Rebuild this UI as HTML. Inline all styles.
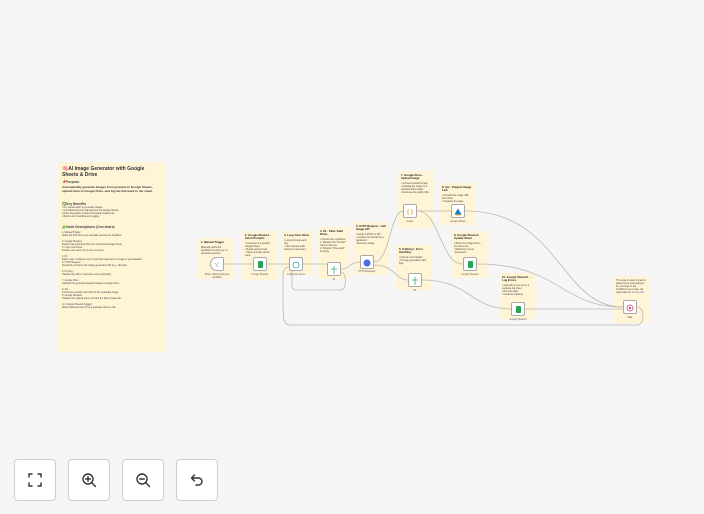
<!DOCTYPE html>
<html><head><meta charset="utf-8"><style>
*{margin:0;padding:0;box-sizing:border-box}
body{width:704px;height:514px;overflow:hidden;background:#f6f6f6;font-family:"Liberation Sans",sans-serif;position:relative}
.n{position:absolute;background:#fff4d6;border-radius:2px;color:#444;font-size:2.4px;line-height:3px;padding:3px;overflow:hidden}
.n b{display:block;font-size:2.8px;color:#222;margin-bottom:2px}
.nd{position:absolute;width:14px;height:14px;background:#fff;border:1px solid #aaa;border-radius:2px}
.lb{position:absolute;font-size:2.4px;color:#555;text-align:center;width:30px}
.btn{position:absolute;top:459px;width:42px;height:42px;background:#fff;border:1px solid #cfcfcf;border-radius:4px;display:flex;align-items:center;justify-content:center}
</style></head><body>
<svg width="704" height="514" style="position:absolute;left:0;top:0">
<defs><pattern id="p" width="5" height="5" patternUnits="userSpaceOnUse" patternTransform="rotate(45)"><line x1="0" y1="0" x2="0" y2="5" stroke="#f2f2f2" stroke-width="1"/></pattern></defs>
<rect width="704" height="514" fill="url(#p)"/>
</svg>
<div class="n" style="left:58px;top:162px;width:107px;height:190px;padding:4px">
<div style="font-size:5px;line-height:6px;font-weight:bold;color:#333">🧠AI Image Generator with Google Sheets &amp; Drive</div>
<div style="font-size:3.3px;margin-top:3px;font-weight:bold">📌Purpose</div>
<div style="font-size:3px;line-height:4px;font-weight:bold;color:#333;margin-top:1px">Automatically generate images from prompts in Google Sheets, upload them to Google Drive, and log the link back to the sheet.</div>
<div style="font-size:3.3px;margin-top:10px;font-weight:bold">✅Key Benefits</div>
<div>• No manual effort to generate images<br>• Centralized prompt management via Google Sheets<br>• Drive integration provides shareable image links<br>• Built-in error handling and logging</div>
<div style="font-size:3.3px;margin-top:8px;font-weight:bold">🧩Node Descriptions (One-liners)</div>
<div style="margin-top:2px">1. Manual Trigger<br>Starts the flow when you manually execute the workflow.<br><br>2. Google Sheets1<br>Reads rows (prompts) from the connected Google Sheet.<br>3. Loop Over Items<br>Iterates over each row (1 line at a time).<br><br>4. If1<br>Filters rows: continues only if a prompt exists and no image is yet uploaded.<br>5. HTTP Request<br>Sends the prompt to the image generation API (e.g., OpenAI).<br><br>6. If (retry)<br>Handles any API or response errors gracefully.<br><br>7. Google Drive<br>Uploads the generated base64 image to Google Drive.<br><br>8. Set<br>Constructs a public view URL for the uploaded image.<br>9. Google Sheets2<br>Updates the original sheet row with the Drive image link.<br><br>10. Google Sheets3 (logger)<br>Writes failures/errors (if) to a separate sheet or tab.</div>
</div>
<div class="n" style="left:198px;top:238px;width:36px;height:41px"><b>1. Manual Trigger</b>Manually starts the workflow for testing or on-demand execution.</div>
<div class="n" style="left:242px;top:231px;width:36px;height:49px"><b>2. Google Sheets1 - Fetch Prompts</b>• Connects to a specific Google Sheet<br>• Reads prompt rows<br>• These prompts will be used</div>
<div class="n" style="left:281px;top:231px;width:32px;height:44px"><b>3. Loop Over Items</b>• Loops through each row<br>• This ensures each prompt is processed</div>
<div class="n" style="left:317px;top:227px;width:33px;height:52px"><b>4. If1 - Filter Valid Rows</b>• Checks two conditions:<br>1. Whether the "Prompt" column has text<br>2. Whether "Drive path" is empty</div>
<div class="n" style="left:353px;top:222px;width:36px;height:53px"><b>5. HTTP Request - Call Image API</b>• Sends a POST to API<br>• Includes the prompt as a parameter<br>• Receives image</div>
<div class="n" style="left:398px;top:171px;width:36px;height:57px"><b>7. Google Drive - Upload Image</b>• Converts base64 image<br>• Uploads the image to a specified Drive folder<br>• Retrieves the public URL</div>
<div class="n" style="left:439px;top:183px;width:36px;height:42px"><b>8. Set - Prepare Image Link</b>• Formats the image URL from Drive<br>• Prepares the value</div>
<div class="n" style="left:451px;top:231px;width:36px;height:47px"><b>9. Google Sheets2 - Update Sheet</b>• Writes the image link to the same row<br>• Marks the row as "processed"</div>
<div class="n" style="left:396px;top:245px;width:36px;height:45px"><b>6. If (Retry) - Error Handling</b>• Acts as error handler<br>• If image generation fails, logs</div>
<div class="n" style="left:499px;top:273px;width:36px;height:46px"><b>10. Google Sheets3 - Log Errors</b>• Appends a new row to a separate log sheet<br>• Records data<br>• Useful for tracking</div>
<div class="n" style="left:613px;top:276px;width:36px;height:47px">This node is used to insert a delay before proceeding to the next step in the workflow in your case, the node waits for <span style="color:#7a4fd0">10 seconds</span></div>
<svg width="704" height="514" style="position:absolute;left:0;top:0" fill="none" stroke="#b8b8b8" stroke-width="0.8">
<path d="M224 264 H253"/><path d="M267 264 H289"/><path d="M303 264 H327"/>
<path d="M341 269 C350 269 350 262 360 262"/>
<path d="M374 262 C390 262 390 211 403 211"/><path d="M374 265 C395 265 395 280 408 280"/>
<path d="M417 211 H451"/><path d="M417 211 C440 211 440 264 463 264"/>
<path d="M465 211 C560 211 560 307 623 307"/><path d="M477 264 C560 264 560 307 623 307"/>
<path d="M422 280 C470 280 470 309 511 309"/><path d="M525 309 H623"/>
<path d="M637 307 C645 307 645 325 637 325 H290 C283 325 283 318 283 300 V275 C283 269 286 267 289 267"/>
<path d="M341 272 C347 272 347 290 341 290 H296 C293 290 292 288 292 285 V271"/>
</svg>
<div class="nd" style="left:210px;top:257px;border-radius:7px 2px 2px 7px"><svg width="12" height="12"><path d="M4 4 l3 4 M6 4 h2" stroke="#888" stroke-width=".6"/></svg></div>
<div class="nd" style="left:253px;top:257px"><div style="margin:3px 4px;width:5px;height:7px;background:#23a456;border-radius:1px"></div></div>
<div class="nd" style="left:289px;top:257px"><svg width="12" height="12"><circle cx="6" cy="6" r="3" stroke="#2ba89e" stroke-width=".8" fill="none"/></svg></div>
<div class="nd" style="left:327px;top:262px"><svg width="12" height="12"><path d="M6 2 V10 M3 5 H9" stroke="#3ca86a" stroke-width=".8"/></svg></div>
<div class="nd" style="left:360px;top:255px"><svg width="12" height="12"><circle cx="6" cy="6" r="3.5" fill="#4a6ee0"/></svg></div>
<div class="nd" style="left:403px;top:204px"><svg width="12" height="12"><path d="M4.5 3 Q3 6 4.5 9 M7.5 3 Q9 6 7.5 9" stroke="#f08a24" stroke-width=".7" fill="none"/></svg></div>
<div class="nd" style="left:451px;top:204px"><svg width="12" height="12"><path d="M6 2.5 L9.5 8.5 H2.5 Z" fill="#1a73e8"/><path d="M6 2.5 L2.5 8.5 L4 8.5 Z" fill="#0f9d58"/><path d="M4 8.5 H9.5 L8.5 9.5 H3.5Z" fill="#fbbc05"/></svg></div>
<div class="nd" style="left:463px;top:257px"><div style="margin:3px 4px;width:5px;height:7px;background:#23a456;border-radius:1px"></div></div>
<div class="nd" style="left:408px;top:273px"><svg width="12" height="12"><path d="M6 2 V10 M3 5 H9" stroke="#3ca86a" stroke-width=".8"/></svg></div>
<div class="nd" style="left:511px;top:302px"><div style="margin:3px 4px;width:5px;height:7px;background:#23a456;border-radius:1px"></div></div>
<div class="nd" style="left:623px;top:300px"><svg width="12" height="12"><circle cx="6" cy="6" r="3" stroke="#c04a7a" stroke-width=".8" fill="none"/><circle cx="6" cy="6" r="1.2" fill="#c04a7a"/></svg></div>
<div class="lb" style="left:202px;top:273px">When clicking 'Execute workflow'</div>
<div class="lb" style="left:245px;top:273px">Google Sheets1</div>
<div class="lb" style="left:281px;top:273px">Loop Over Items</div>
<div class="lb" style="left:319px;top:278px">If1</div>
<div class="lb" style="left:352px;top:270px">HTTP Request1</div>
<div class="lb" style="left:395px;top:220px">Code1</div>
<div class="lb" style="left:443px;top:220px">Google Drive2</div>
<div class="lb" style="left:455px;top:273px">Google Sheets2</div>
<div class="lb" style="left:400px;top:289px">If2</div>
<div class="lb" style="left:503px;top:318px">Google Sheets3</div>
<div class="lb" style="left:615px;top:316px">Wait</div>
<div class="btn" style="left:14px"><svg width="16" height="16" fill="none" stroke="#333" stroke-width="1.4" stroke-linecap="round"><path d="M2 5V2H5M11 2H14V5M14 11V14H11M5 14H2V11"/></svg></div>
<div class="btn" style="left:68px"><svg width="16" height="16" fill="none" stroke="#333" stroke-width="1.4" stroke-linecap="round"><circle cx="7" cy="7" r="5"/><path d="M11 11L14.5 14.5M7 4.7V9.3M4.7 7H9.3"/></svg></div>
<div class="btn" style="left:122px"><svg width="16" height="16" fill="none" stroke="#333" stroke-width="1.4" stroke-linecap="round"><circle cx="7" cy="7" r="5"/><path d="M11 11L14.5 14.5M4.7 7H9.3"/></svg></div>
<div class="btn" style="left:176px"><svg width="16" height="16" fill="none" stroke="#333" stroke-width="1.4" stroke-linecap="round" stroke-linejoin="round"><path d="M5.5 3L2.5 6L5.5 9M2.5 6H9.5A3.5 3.5 0 0 1 9.5 13H7"/></svg></div>
</body></html>
